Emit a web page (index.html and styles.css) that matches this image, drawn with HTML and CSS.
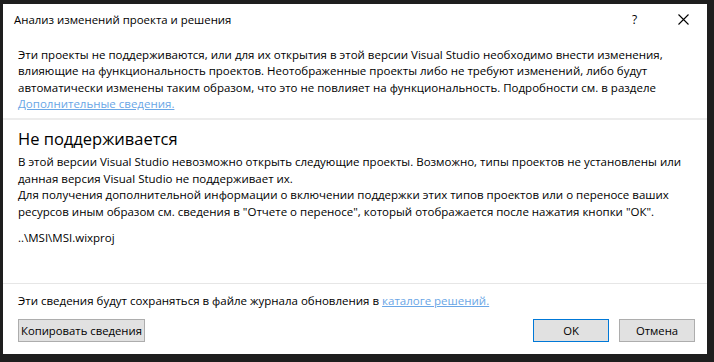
FILE: index.html
```html
<!DOCTYPE html>
<html lang="ru">
<head>
    <meta charset="UTF-8">
    <meta name="viewport" content="width=device-width, initial-scale=1.0">
    <title>Анализ изменений проекта и решения</title>
    <link rel="stylesheet" href="styles.css">
</head>
<body>
    <div class="window">
        <div class="titlebar">
            <span class="title">Анализ изменений проекта и решения</span>
            <span class="help">?</span>
            <span class="close">
                <svg width="11" height="11" viewBox="0 0 11 11">
                    <path d="M0.5 0.5L10.5 10.5M10.5 0.5L0.5 10.5" stroke="#000" stroke-width="1.1" fill="none"/>
                </svg>
            </span>
        </div>

        <p class="intro">
            Эти проекты не поддерживаются, или для их открытия в этой версии Visual Studio необходимо внести изменения,<br>
            влияющие на функциональность проектов. Неотображенные проекты либо не требуют изменений, либо будут<br>
            автоматически изменены таким образом, что это не повлияет на функциональность. Подробности см. в разделе<br>
            <a href="#" class="link">Дополнительные сведения.</a>
        </p>

        <div class="content">
            <h2 class="heading">Не поддерживается</h2>
            <p class="text">
                В этой версии Visual Studio невозможно открыть следующие проекты. Возможно, типы проектов не установлены или<br>
                данная версия Visual Studio не поддерживает их.<br>
                Для получения дополнительной информации о включении поддержки этих типов проектов или о переносе ваших<br>
                ресурсов иным образом см. сведения в "Отчете о переносе", который отображается после нажатия кнопки "ОК".
            </p>
            <p class="project">..\MSI\MSI.wixproj</p>
        </div>

        <div class="footer">
            <p class="note">Эти сведения будут сохраняться в файле журнала обновления в <a href="#" class="link">каталоге решений.</a></p>
            <div class="buttons">
                <button class="btn">Копировать сведения</button>
                <span class="spacer"></span>
                <button class="btn default">OK</button>
                <button class="btn">Отмена</button>
            </div>
        </div>
    </div>
</body>
</html>
```

FILE: styles.css
```css
body {
    margin: 0;
    background: #1e1e1e;
    font-family: 'Open Sans', 'Noto Sans', sans-serif;
    font-size: 11.5px;
    color: #000;
}

.window {
    margin: 4px 7px 0 3px;
    height: 350px;
    background: #fff;
    display: flex;
    flex-direction: column;
}

.titlebar {
    height: 30px;
    display: flex;
    align-items: center;
    padding-left: 11px;
}

.title {
    flex: 1;
    font-size: 11.4px;
}

.help {
    width: 20px;
    font-size: 12px;
    margin-right: 26px;
}

.close {
    width: 11px;
    height: 11px;
    margin-right: 18px;
    display: flex;
}

.intro {
    margin: 13px 0 0;
    padding: 0 15px 6px;
    line-height: 16.3px;
    white-space: nowrap;
    border-bottom: 2px solid #ececec;
}

.link {
    color: #6aa6e6;
    text-decoration: underline;
}

.content {
    flex: 1;
    padding: 7px 15px 0;
    border-bottom: 1px solid #e6e6e6;
}

.heading {
    margin: 0;
    font-size: 16.5px;
    font-weight: normal;
    line-height: 24px;
}

.text {
    margin: 3px 0 0;
    line-height: 16.6px;
    white-space: nowrap;
}

.project {
    margin: 9px 0 0;
    line-height: 16px;
}

.footer {
    padding: 9px 12px 12px 15px;
}

.note {
    margin: 0;
    line-height: 16px;
}

.buttons {
    display: flex;
    gap: 10px;
    margin-top: 10px;
}

.spacer {
    flex: 1;
}

.btn {
    height: 23px;
    min-width: 76px;
    padding: 0 2px;
    font-family: inherit;
    font-size: 11.3px;
    color: #000;
    background: #e1e1e1;
    border: 1px solid #adadad;
    border-radius: 0;
}

.btn.default {
    border-color: #0078d7;
}
```
